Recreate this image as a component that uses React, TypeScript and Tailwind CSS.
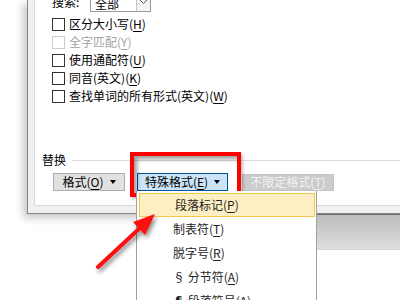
import React from "react";

const options = [
  { label: "区分大小写", k: "H" },
  { label: "全字匹配", k: "Y", disabled: true },
  { label: "使用通配符", k: "U" },
  { label: "同音(英文)", k: "K" },
  { label: "查找单词的所有形式(英文)", k: "W" },
];

const menuItems = [
  { label: "段落标记", k: "P", active: true },
  { label: "制表符", k: "T" },
  { label: "脱字号", k: "R" },
  { label: "§ 分节符", k: "A" },
  { label: "¶ 段落符号", k: "A" },
];

function Key({ k }: { k: string }) {
  return (
    <>
      (<span className="underline underline-offset-2">{k}</span>)
    </>
  );
}

function Caret() {
  return <span className="ml-[6px] inline-block border-x-[3px] border-t-[4px] border-x-transparent border-t-current align-middle" />;
}

export default function App() {
  return (
    <div className="relative w-[400px] h-[300px] overflow-hidden bg-white font-['Noto_Sans_CJK_SC',sans-serif] text-[12px] leading-none text-black">
      {/* dialog */}
      <div className="ml-[27px] w-[420px] h-[214px] border-l border-b border-[#858585] bg-[#f0f0f0] pl-[6px] pb-[7px] shadow-[-4px_4px_8px_rgba(0,0,0,0.22)]">
        <div className="h-full border-l border-b border-[#dadada] bg-white pl-[17px] flex flex-col">
          <div className="flex items-end h-[20px] -mt-[8px]">
            <span className="w-[38px] pb-[4px]">搜索:</span>
            <div className="flex h-full w-[61px] border border-[#9a9a9a]">
              <span className="flex-1 pl-[4px] pt-[5px]">全部</span>
              <div className="w-[14px] border-l border-[#c8c8c8] bg-[#f4f4f4] flex items-center justify-center">
                <svg width="9" height="6" viewBox="0 0 9 6">
                  <polyline points="0.5,0.5 4.5,4.5 8.5,0.5" fill="none" stroke="#555" strokeWidth="1" />
                </svg>
              </div>
            </div>
          </div>

          <div className="mt-[3px] flex flex-col">
            {options.map((o) => (
              <div key={o.label} className="flex items-center h-[18px]">
                <span className={`w-[13px] h-[13px] border ${o.disabled ? "border-[#cccccc]" : "border-[#333333]"} bg-white`} />
                <span className={`ml-[4px] ${o.disabled ? "text-[#a3a3a3]" : ""}`}>
                  {o.label}
                  <Key k={o.k} />
                </span>
              </div>
            ))}
          </div>

          <div className="mt-[48px] -ml-[10px] flex items-center h-[14px]">
            <span>替换</span>
            <div className="ml-[6px] flex-1 h-px bg-[#dcdcdc]" />
          </div>

          <div className="mt-[6px] ml-[1px] flex items-center h-[18px]">
            <button className="w-[72px] h-[18px] border border-[#adadad] bg-[#e1e1e1] flex items-center justify-center">
              格式<Key k="O" />
              <Caret />
            </button>
            <button className="ml-[12px] w-[91px] h-[18px] border border-[#005499] bg-[#cce4f7] flex items-center justify-center">
              特殊格式<Key k="E" />
              <Caret />
            </button>
            <button className="ml-[14px] w-[92px] h-[17px] border border-[#c4c4c4] bg-[#cccccc] text-[#f2f2f2] flex items-center justify-center">
              不限定格式<Key k="T" />
            </button>
          </div>
        </div>
      </div>

      {/* grey band behind, right of the menu */}
      <div className="ml-[136px] h-[36px] border-t border-[#6a6a6a] border-b border-b-[#d4d4d4] bg-gradient-to-b from-[#bcbcbc] to-[#dfdfdf]" />

      {/* red highlight around the button */}
      <div className="absolute left-[130px] top-[152px] w-[111px] h-[45px] border-[4px] border-[#ff0000] shadow-[inset_3px_3px_4px_rgba(0,0,0,0.4),2px_2px_3px_rgba(0,0,0,0.25)]" />

      {/* dropdown menu */}
      <div className="absolute left-[136px] top-[191px] w-[181px] h-[120px] border-x border-[#a0a0a0] bg-white pt-[2px] px-[1px] text-[#1e1e1e]">
        {menuItems.map((m) => (
          <div
            key={m.label}
            className={`h-[24px] flex items-center pl-[35px] ${m.active ? "ml-px border border-[#f2c94c] bg-[#fdeec4] pl-[34px]" : ""}`}
          >
            {m.label}
            <Key k={m.k} />
          </div>
        ))}
      </div>

      {/* arrow */}
      <svg className="absolute left-0 top-0 drop-shadow-[2px_3px_2px_rgba(0,0,0,0.45)]" width="400" height="300" viewBox="0 0 400 300">
        <line x1="98" y1="267" x2="141" y2="227" stroke="#ff1010" strokeWidth="4" strokeLinecap="round" />
        <polygon points="155,214 133,222 145,235" fill="#ff1010" />
      </svg>
    </div>
  );
}
